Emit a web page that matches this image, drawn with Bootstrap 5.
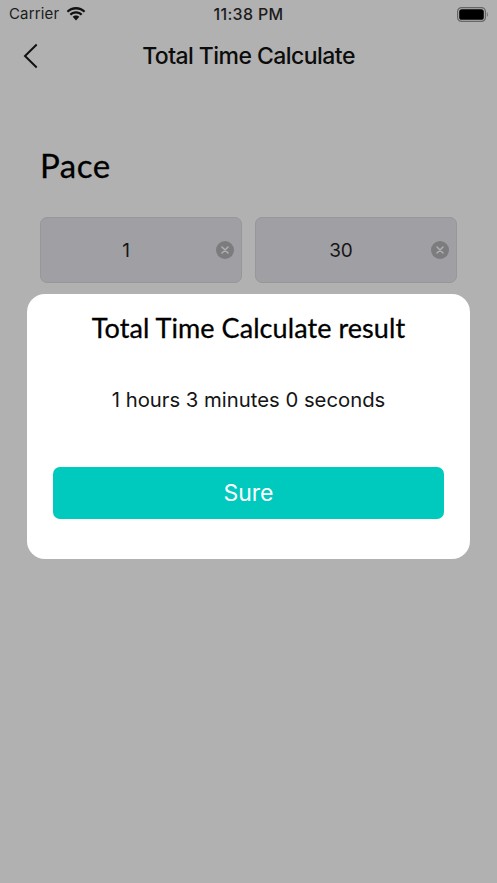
<!DOCTYPE html>
<html lang="en">
<head>
<meta charset="utf-8">
<meta name="viewport" content="width=device-width, initial-scale=1">
<link href="https://cdn.jsdelivr.net/npm/bootstrap@5.3.0/dist/css/bootstrap.min.css" rel="stylesheet">
<style>
html, body { height: 100%; }
body { background: #b1b1b1; font-family: Inter, "Liberation Sans", sans-serif; color: #000; overflow: hidden; }
.screen { position: relative; width: 497px; height: 883px; background: #b1b1b1; }
.status-row { height: 28px; padding: 0 9px; position: relative; color: #1c1c1c; }
.status-carrier { font-size: 15px; line-height: 28px; letter-spacing: .15px; }
.wifi-gap { gap: 7px; }
.status-time { position: absolute; left: 0; right: 0; top: 0; text-align: center; font-size: 16px; font-weight: 500; letter-spacing: .35px; line-height: 28px; }
.title-row { height: 56px; position: relative; }
.back-btn { position: absolute; left: 23px; top: 15px; }
.title-text { font-size: 23px; font-weight: 500; letter-spacing: -.55px; color: #0c0c0c; line-height: 56px; }
.pace-label { font-family: Lato, "Liberation Sans", sans-serif; font-size: 33px; font-weight: 400; letter-spacing: .5px; -webkit-text-stroke: .3px #000; line-height: 40px; margin: 61px 0 0 40px; color: #000; }
.fields { margin: 32px 40px 0; gap: 13px; }
.field-box { position: relative; width: 202px; height: 66px; padding-right: 30px; background: #a09fa4; border: 1px solid #979799; border-radius: 7px; font-size: 19px; line-height: 66px; text-align: center; color: #161616; }
.clear-x { position: absolute; right: 7px; top: 23px; display: block; }
.dialog-box { position: absolute; left: 27px; top: 294px; width: 443px; height: 265px; background: #fff; border: 0; border-radius: 18px; }
.dialog-title { font-family: Lato, "Liberation Sans", sans-serif; font-size: 27px; font-weight: 400; letter-spacing: .07px; -webkit-text-stroke: .3px #000; line-height: 34px; margin-top: 17px; color: #000; }
.dialog-msg { font-size: 20.3px; line-height: 28px; margin-top: 41px; color: #151515; }
.sure-btn { display: block; width: 391px; height: 52px; margin: 53px auto 0; background: #00c9bd; border: 0; border-radius: 7px; color: #fff; font-size: 23px; line-height: 52px; padding: 0; }
.sure-btn:hover { background: #00c9bd; color: #fff; }
</style>
</head>
<body>
<div class="screen">
  <div class="status-row d-flex align-items-center justify-content-between">
    <div class="d-flex align-items-center wifi-gap">
      <span class="status-carrier">Carrier</span>
      <svg width="20" height="15" viewBox="0 0 20 15" aria-hidden="true"><path d="M10 2.400c3 0 5.700 1.100 7.800 3.100l1.500-1.600C16.800 1.500 13.500 0 10 0S3.200 1.500.7 3.900l1.500 1.600C4.300 3.500 7 2.400 10 2.400z" fill="#111"/><path d="M10 6.600c1.900 0 3.600.7 4.900 2l1.500-1.600C14.700 5.300 12.500 4.300 10 4.300S5.300 5.300 3.600 7l1.500 1.600c1.300-1.300 3-2 4.900-2z" fill="#111"/><path d="M10 8.500c-1.300 0-2.400.5-3.300 1.300L10 13.400l3.300-3.600c-.9-.8-2-1.300-3.300-1.300z" fill="#111"/></svg>
    </div>
    <div class="status-time">11:38 PM</div>
    <svg width="31" height="15" viewBox="0 0 31 15" aria-hidden="true"><rect x=".6" y=".6" width="27.800" height="13.800" rx="4" fill="none" stroke="#666" stroke-width="1.200"/><rect x="2.200" y="2.200" width="24.600" height="10.600" rx="2.600" fill="#000"/><path d="M29.800 5.200v4.600c.8-.3 1.200-1.300 1.200-2.300s-.4-2-1.200-2.300z" fill="#777"/></svg>
  </div>
  <div class="title-row text-center">
    <svg class="back-btn" width="16" height="26" viewBox="0 0 16 26" aria-hidden="true"><path d="M13.700 1.500 2 13l11.700 11.500" fill="none" stroke="#111" stroke-width="2"/></svg>
    <div class="title-text">Total Time Calculate</div>
  </div>
  <div class="pace-label">Pace</div>
  <div class="fields d-flex">
    <div class="field-box">1
      <svg class="clear-x" width="18" height="18" viewBox="0 0 19 19" aria-hidden="true"><circle cx="9.500" cy="9.500" r="9.500" fill="#7c7c7e"/><path d="M6.300 6.300l6.400 6.400M12.700 6.300l-6.400 6.400" stroke="#b0b0b2" stroke-width="1.600" stroke-linecap="round"/></svg>
    </div>
    <div class="field-box">30
      <svg class="clear-x" width="18" height="18" viewBox="0 0 19 19" aria-hidden="true"><circle cx="9.500" cy="9.500" r="9.500" fill="#7c7c7e"/><path d="M6.300 6.300l6.400 6.400M12.700 6.300l-6.400 6.400" stroke="#b0b0b2" stroke-width="1.600" stroke-linecap="round"/></svg>
    </div>
  </div>
  <div class="card dialog-box text-center">
    <div class="dialog-title">Total Time Calculate result</div>
    <div class="dialog-msg">1 hours 3 minutes 0 seconds</div>
    <button type="button" class="btn sure-btn">Sure</button>
  </div>
</div>
<script src="https://cdn.jsdelivr.net/npm/bootstrap@5.3.0/dist/js/bootstrap.bundle.min.js"></script>
</body>
</html>
